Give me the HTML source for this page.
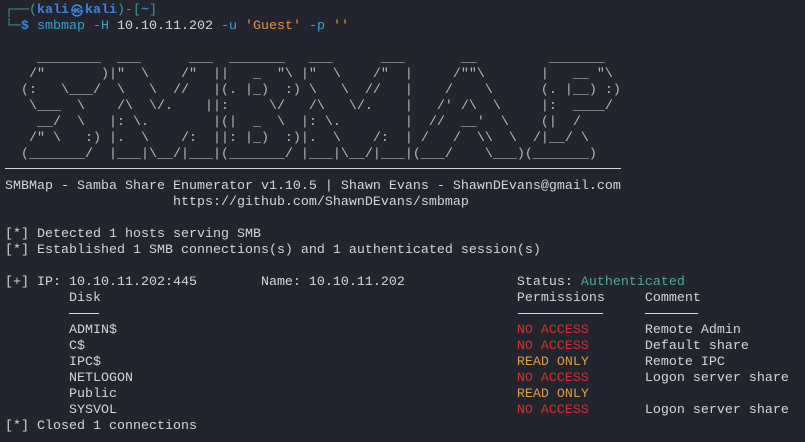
<!DOCTYPE html>
<html><head><meta charset="utf-8"><style>
html,body{margin:0;padding:0;background:#23252e;width:805px;height:442px;overflow:hidden}
pre{margin:0;position:absolute;left:5px;top:3px;font-family:"Liberation Mono","DejaVu Sans Mono",monospace;font-size:13.33px;line-height:16px;color:#d4d4d4;white-space:pre}
.g{color:#3a9e88}.b{color:#3b82d8;font-weight:bold}.c{color:#3aa0c8}.o{color:#e0904a}
.t{color:#4fa896}.r{color:#d0302a}.y{color:#e09a40}.a{color:#b8b8b8}
.sym{display:inline-block;width:16px;text-align:center;font-size:12px;font-family:"DejaVu Sans",sans-serif;vertical-align:top}
.ln{position:absolute;height:1px;background:#d4d4d4;top:313px}
.rule{position:absolute;left:5px;top:168px;width:616px;height:1px;background:#d4d4d4}
</style></head><body>
<pre><span class="g">┌──(</span><span class="b">kali<span class="sym">㉿</span>kali</span><span class="g">)-[</span><span class="b">~</span><span class="g">]</span>
<span class="g">└─</span><span class="b">$</span> <span class="c">smbmap</span> <span class="c">-H</span> 10.10.11.202 <span class="c">-u</span> <span class="o">'Guest'</span> <span class="c">-p</span> <span class="o">''</span>

<span class="a">    ________  ___      ___  _______   ___      ___       __         _______
   /"       )|"  \    /"  ||   _  "\ |"  \    /"  |     /""\       |   __ "\
  (:   \___/  \   \  //   |(. |_)  :) \   \  //   |    /    \      (. |__) :)
   \___  \    /\  \/.    ||:     \/   /\   \/.    |   /' /\  \     |:  ____/
    __/  \   |: \.        |(|  _  \  |: \.        |  //  __'  \    (|  /
   /" \   :) |.  \    /:  ||: |_)  :)|.  \    /:  | /   /  \\  \  /|__/ \
  (_______/  |___|\__/|___|(_______/ |___|\__/|___|(___/    \___)(_______)</span>

SMBMap - Samba Share Enumerator v1.10.5 | Shawn Evans - ShawnDEvans@gmail.com
                     https://github.com/ShawnDEvans/smbmap

[*] Detected 1 hosts serving SMB
[*] Established 1 SMB connections(s) and 1 authenticated session(s)

[+] IP: 10.10.11.202:445        Name: 10.10.11.202              Status: <span class="t">Authenticated</span>
        Disk                                                    Permissions     Comment

        ADMIN$                                                  <span class="r">NO ACCESS</span>       Remote Admin
        C$                                                      <span class="r">NO ACCESS</span>       Default share
        IPC$                                                    <span class="y">READ ONLY</span>       Remote IPC
        NETLOGON                                                <span class="r">NO ACCESS</span>       Logon server share
        Public                                                  <span class="y">READ ONLY</span>
        SYSVOL                                                  <span class="r">NO ACCESS</span>       Logon server share
[*] Closed 1 connections</pre>
<div class="rule"></div>
<div class="ln" style="left:69px;width:30px"></div>
<div class="ln" style="left:518px;width:85px"></div>
<div class="ln" style="left:645px;width:53px"></div>
</body></html>
